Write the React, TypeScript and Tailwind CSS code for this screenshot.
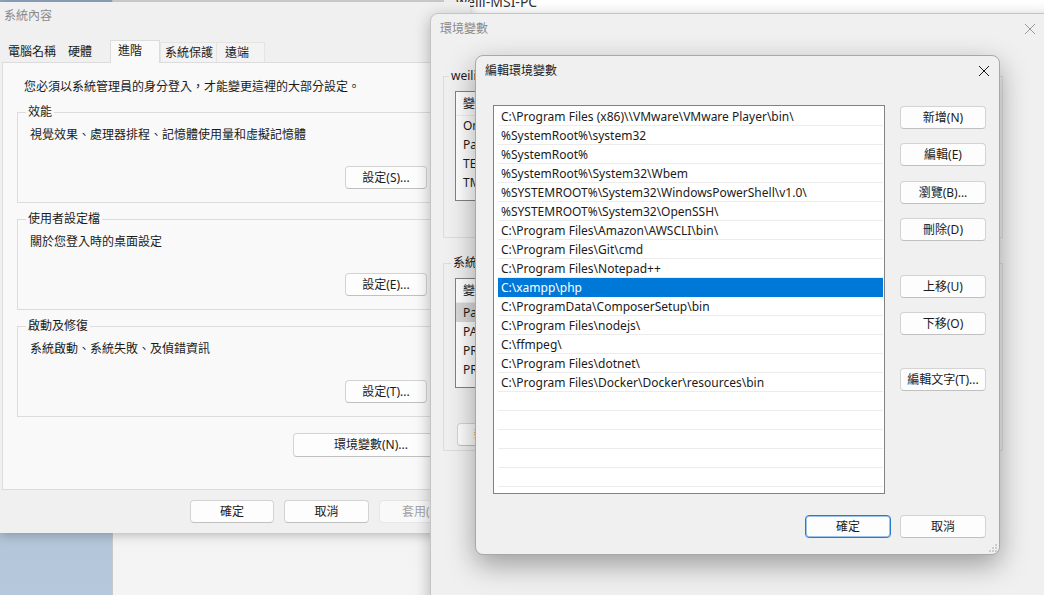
import React from "react";

const paths = [
  "C:\\Program Files (x86)\\\\VMware\\VMware Player\\bin\\",
  "%SystemRoot%\\system32",
  "%SystemRoot%",
  "%SystemRoot%\\System32\\Wbem",
  "%SYSTEMROOT%\\System32\\WindowsPowerShell\\v1.0\\",
  "%SYSTEMROOT%\\System32\\OpenSSH\\",
  "C:\\Program Files\\Amazon\\AWSCLI\\bin\\",
  "C:\\Program Files\\Git\\cmd",
  "C:\\Program Files\\Notepad++",
  "C:\\xampp\\php",
  "C:\\ProgramData\\ComposerSetup\\bin",
  "C:\\Program Files\\nodejs\\",
  "C:\\ffmpeg\\",
  "C:\\Program Files\\dotnet\\",
  "C:\\Program Files\\Docker\\Docker\\resources\\bin",
];

function Btn({
  children,
  className = "",
  variant = "normal",
}: {
  children: React.ReactNode;
  className?: string;
  variant?: "normal" | "disabled" | "focused";
}) {
  const v =
    variant === "disabled"
      ? "border-[#e6e6e6] bg-[#f9f9f9] text-[#a3a3a3]"
      : variant === "focused"
      ? "border-[#2f77c9] bg-[#fdfdfd] text-[#1b1b1b] shadow-[inset_0_0_0_1px_#9cc3ea]"
      : "border-[#d3d3d3] border-b-[#c0c0c0] bg-[#fdfdfd] text-[#1b1b1b]";
  return (
    <div
      className={`flex h-[23px] shrink-0 items-center justify-center rounded-[4px] border text-[12px] leading-none ${v} ${className}`}
    >
      {children}
    </div>
  );
}

function Grip() {
  return (
    <svg width="8" height="8" viewBox="0 0 8 8" className="block">
      <g fill="#a0a0a0">
        <circle cx="7" cy="1" r="0.8" />
        <circle cx="7" cy="4" r="0.8" />
        <circle cx="4" cy="4" r="0.8" />
        <circle cx="7" cy="7" r="0.8" />
        <circle cx="4" cy="7" r="0.8" />
        <circle cx="1" cy="7" r="0.8" />
      </g>
    </svg>
  );
}

function CloseX({ color, size }: { color: string; size: number }) {
  return (
    <svg width={size} height={size} viewBox="0 0 12 12" className="block">
      <path d="M1 1 L11 11 M11 1 L1 11" stroke={color} strokeWidth="1" fill="none" />
    </svg>
  );
}

function Group({
  legend,
  text,
  button,
  className = "",
}: {
  legend: string;
  text: string;
  button: string;
  className?: string;
}) {
  return (
    <fieldset className={`border border-[#dcdcdc] pl-[12px] pr-[21px] pb-[13px] ${className}`}>
      <legend className="-ml-[4px] px-[2px] text-[12px] leading-[16px] text-[#1b1b1b]">{legend}</legend>
      <div className="mt-[7px] text-[12px] leading-[16px] text-[#1b1b1b]">{text}</div>
      <div className="mt-[23px] flex justify-end">
        <Btn className="w-[82px]">{button}</Btn>
      </div>
    </fieldset>
  );
}

function SystemProperties() {
  const tabs = [
    { t: "電腦名稱", w: "w-[60px] pl-[6px]" },
    { t: "硬體", w: "w-[48px] pl-[6px]" },
  ];
  return (
    <div className="absolute left-0 top-[2px] flex h-[531px] w-[470px] flex-col bg-[#f0f0f0] shadow-[0_2px_10px_rgba(0,0,0,0.25)]">
      <div className="flex h-[28px] items-center pl-[4px] text-[12px] text-[#8a8a8a]">系統內容</div>
      <div className="mt-[10px] flex items-end pl-[2px] text-[12px] text-[#1b1b1b]">
        {tabs.map((t) => (
          <div key={t.t} className={`flex h-[20px] items-center ${t.w}`}>
            {t.t}
          </div>
        ))}
        <div className="relative z-10 -mb-px flex h-[23px] w-[50px] items-center border border-b-0 border-[#dcdcdc] bg-[#f9f9f9] pb-[3px] pl-[7px]">
          進階
        </div>
        <div className="flex h-[20px] w-[57px] items-center border border-b-0 border-[#e4e4e4] bg-[#f3f3f3] pl-[4px]">
          系統保護
        </div>
        <div className="flex h-[20px] w-[48px] items-center border border-b-0 border-l-0 border-[#e4e4e4] bg-[#f3f3f3] pl-[8px]">
          遠端
        </div>
      </div>
      <div className="ml-[2px] mr-[6px] flex h-[428px] flex-col border border-[#dcdcdc] bg-[#f9f9f9] px-[14px] pt-[16px]">
        <div className="ml-[7px] text-[12px] leading-[16px] text-[#1b1b1b]">
          您必須以系統管理員的身分登入，才能變更這裡的大部分設定。
        </div>
        <Group className="mt-[9px]" legend="效能" text="視覺效果、處理器排程、記憶體使用量和虛擬記憶體" button="設定(S)..." />
        <Group className="mt-[8px]" legend="使用者設定檔" text="關於您登入時的桌面設定" button="設定(E)..." />
        <Group className="mt-[8px]" legend="啟動及修復" text="系統啟動、系統失敗、及偵錯資訊" button="設定(T)..." />
        <div className="mt-[16px] flex justify-end">
          <Btn className="h-[24px] w-[156px]">環境變數(N)...</Btn>
        </div>
      </div>
      <div className="mt-[10px] flex justify-end gap-[10px] pr-[6px]">
        <Btn className="w-[84px]">確定</Btn>
        <Btn className="w-[85px]">取消</Btn>
        <Btn className="w-[85px]" variant="disabled">套用(A)</Btn>
      </div>
    </div>
  );
}

function EnvList({ rows, selected }: { rows: string[]; selected?: number }) {
  return (
    <div className="h-[110px] w-[400px] overflow-hidden border border-[#828282] bg-white text-[12px] text-[#1b1b1b]">
      <div className="flex h-[24px] items-center border-b border-[#eeeeee] pl-[7px]">變數</div>
      {rows.map((r, i) => (
        <div
          key={i}
          className={`flex h-[19px] items-center pl-[7px] ${i === selected ? "bg-[#d9d9d9]" : ""}`}
        >
          {r}
        </div>
      ))}
    </div>
  );
}

function EnvWindow() {
  return (
    <div className="absolute left-[430px] top-[13px] flex h-[620px] w-[624px] flex-col rounded-tl-[8px] border border-[#c4c4c4] bg-[#f0f0f0] shadow-[0_4px_16px_rgba(0,0,0,0.28)]">
      <div className="flex h-[30px] items-center justify-between pl-[9px] pr-[17px]">
        <span className="text-[12px] text-[#8a8a8a]">環境變數</span>
        <CloseX color="#9a9a9a" size={12} />
      </div>
      <fieldset className="ml-[12px] mt-[24px] h-[170px] w-[560px] border border-[#dcdcdc] pl-[11px]">
        <legend className="-ml-[6px] px-[2px] text-[12px] leading-[16px] text-[#1b1b1b]">weili 的使用者變數(U)</legend>
        <div className="mt-[7px]">
          <EnvList rows={["OneDrive", "Path", "TEMP", "TMP"]} />
        </div>
      </fieldset>
      <fieldset className="ml-[12px] mt-[17px] h-[196px] w-[560px] border border-[#dcdcdc] pl-[11px]">
        <legend className="-ml-[4px] px-[2px] text-[12px] leading-[16px] text-[#1b1b1b]">系統變數(S)</legend>
        <div className="mt-[7px]">
          <EnvList
            rows={["Path", "PATHEXT", "PROCESSOR_ARCHITECTURE", "PROCESSOR_IDENTIFIER"]}
            selected={0}
          />
        </div>
        <div className="mt-[35px] flex gap-[10px] pl-[2px]">
          <Btn className="w-[86px]">新增(W)...</Btn>
        </div>
      </fieldset>
      <div className="absolute bottom-[25px] right-[10px]">
        <Grip />
      </div>
    </div>
  );
}

function EditDialog() {
  const total = 20;
  const rows = Array.from({ length: total }, (_, i) => paths[i] ?? "");
  return (
    <div className="absolute left-[475px] top-[55px] flex h-[500px] w-[525px] flex-col rounded-[8px] border border-[#a8a8a8] bg-[#f0f0f0] shadow-[0_10px_28px_rgba(0,0,0,0.35)]">
      <div className="flex h-[30px] items-center justify-between pl-[9px] pr-[9px]">
        <span className="text-[12px] text-[#1b1b1b]">編輯環境變數</span>
        <CloseX color="#1b1b1b" size={12} />
      </div>
      <div className="flex pl-[17px] pt-[19px]">
        <div className="h-[389px] w-[392px] overflow-hidden border border-[#828282] bg-white pl-[4px] pr-[1px] pt-px">
          {rows.map((r, i) => (
            <div
              key={i}
              className={`flex h-[19px] items-center whitespace-nowrap border-b pl-[3px] pt-[2px] text-[12px] ${
                i === 9
                  ? "border-[#0078d7] bg-[#0078d7] text-white"
                  : "border-[#ececec] text-[#1b1b1b]"
              }`}
            >
              {r}
            </div>
          ))}
        </div>
        <div className="ml-[15px] flex flex-col pt-px">
          <Btn className="w-[86px]">新增(N)</Btn>
          <Btn className="mt-[14px] w-[86px]">編輯(E)</Btn>
          <Btn className="mt-[15px] w-[86px]">瀏覽(B)...</Btn>
          <Btn className="mt-[14px] w-[86px]">刪除(D)</Btn>
          <Btn className="mt-[34px] w-[86px]">上移(U)</Btn>
          <Btn className="mt-[14px] w-[86px]">下移(O)</Btn>
          <Btn className="mt-[33px] w-[86px]">編輯文字(T)...</Btn>
        </div>
      </div>
      <div className="mt-[21px] flex justify-end gap-[9px] pr-[13px]">
        <Btn className="w-[86px]" variant="focused">確定</Btn>
        <Btn className="w-[86px]">取消</Btn>
      </div>
      <div className="absolute bottom-[2px] right-[2px]">
        <Grip />
      </div>
    </div>
  );
}

export default function App() {
  return (
    <div className="relative h-[595px] w-[1044px] overflow-hidden bg-[#f3f3f3] font-['Noto_Sans','Noto_Sans_CJK_TC',sans-serif]">
      {/* desktop wallpaper strip */}
      <div className="absolute left-0 top-0 h-[595px] w-[112px] bg-gradient-to-b from-[#8fa7c0] to-[#b6c9dc]" />
      {/* window behind, lower middle */}
      <div className="absolute left-[112px] top-0 h-[595px] w-[340px] border-l border-[#c8c8c8] bg-gradient-to-b from-[#d6d6d6] via-[#eeeeee] to-[#f4f4f4]" />
      {/* window behind, top right */}
      <div className="absolute left-[443px] top-[-30px] h-[80px] w-[610px] border-l border-[#d0d0d0] bg-white pl-[12px] pt-[19px]">
        <span className="text-[14px] leading-[16px] text-[#333]">weili-MSI-PC</span>
      </div>
      <SystemProperties />
      <EnvWindow />
      <EditDialog />
    </div>
  );
}
